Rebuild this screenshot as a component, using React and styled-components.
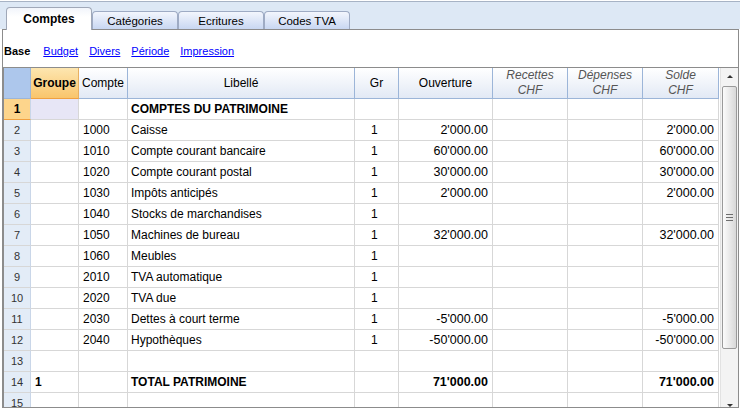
import React from 'react';
import styled, { createGlobalStyle, css } from 'styled-components';

const GlobalStyle = createGlobalStyle`
  html, body {
    margin: 0;
    padding: 0;
    background: #ffffff;
  }
  body {
    font-family: "Liberation Sans", Arial, sans-serif;
    color: #000;
  }
`;

const COLS = '27px 48px 49px 227px 44px 94px 75px 75px 76px';

const ROWS = [
  { n: 1, libelle: 'COMPTES DU PATRIMOINE', title: true },
  { n: 2, compte: '1000', libelle: 'Caisse', gr: '1', ouv: "2'000.00", solde: "2'000.00" },
  { n: 3, compte: '1010', libelle: 'Compte courant bancaire', gr: '1', ouv: "60'000.00", solde: "60'000.00" },
  { n: 4, compte: '1020', libelle: 'Compte courant postal', gr: '1', ouv: "30'000.00", solde: "30'000.00" },
  { n: 5, compte: '1030', libelle: 'Impôts anticipés', gr: '1', ouv: "2'000.00", solde: "2'000.00" },
  { n: 6, compte: '1040', libelle: 'Stocks de marchandises', gr: '1' },
  { n: 7, compte: '1050', libelle: 'Machines de bureau', gr: '1', ouv: "32'000.00", solde: "32'000.00" },
  { n: 8, compte: '1060', libelle: 'Meubles', gr: '1' },
  { n: 9, compte: '2010', libelle: 'TVA automatique', gr: '1' },
  { n: 10, compte: '2020', libelle: 'TVA due', gr: '1' },
  { n: 11, compte: '2030', libelle: 'Dettes à court terme', gr: '1', ouv: "-5'000.00", solde: "-5'000.00" },
  { n: 12, compte: '2040', libelle: 'Hypothèques', gr: '1', ouv: "-50'000.00", solde: "-50'000.00" },
  { n: 13 },
  { n: 14, groupe: '1', libelle: 'TOTAL PATRIMOINE', ouv: "71'000.00", solde: "71'000.00", total: true },
  { n: 15 },
];

const Window = styled.div`
  width: 740px;
  height: 410px;
  display: flex;
  flex-direction: column;
  overflow: hidden;
`;

const TabBar = styled.div`
  height: 27px;
  margin-top: 1px;
  border-top: 1px solid #a7b3c5;
  background: #dde8f5;
  display: flex;
  align-items: flex-end;
  padding-left: 6px;
  position: relative;
  z-index: 1;
`;

const Tab = styled.div`
  box-sizing: border-box;
  width: 86px;
  display: flex;
  align-items: center;
  justify-content: center;
  font-size: 11.5px;
  border: 1px solid #9eabc4;
  border-bottom: none;
  border-radius: 4px 4px 0 0;
  height: 18px;
  background: linear-gradient(#f3f6fd, #c8d7f2);
  color: #000;

  ${(p) =>
    p.$active &&
    css`
      height: 23px;
      margin-bottom: -1px;
      font-weight: bold;
      font-size: 12px;
      padding-bottom: 1px;
      border-color: #a0a8b8;
      background: linear-gradient(#f2f5fb, #ffffff 40%);
    `}
`;

const Panel = styled.div`
  flex: 1;
  margin: 0 1px 2px 2px;
  border: 1px solid #8c8c8c;
  background: #fff;
  display: flex;
  flex-direction: column;
  min-height: 0;
`;

const SubTabs = styled.div`
  box-sizing: border-box;
  height: 37px;
  padding: 4px 0 0 1px;
  display: flex;
  align-items: center;
  gap: 11px;
  font-size: 11px;
`;

const SubTab = styled.span`
  ${(p) =>
    p.$active
      ? css`
          font-weight: bold;
          margin-right: 2px;
        `
      : css`
          color: #0000ff;
          text-decoration: underline;
        `}
`;

const GridArea = styled.div`
  flex: 1;
  min-height: 0;
  display: flex;
  overflow: hidden;
  border-top: 1px solid #8c8c8c;
  border-left: 1px solid #8c8c8c;
`;

const Table = styled.div`
  display: flex;
  flex-direction: column;
`;

const HeaderRow = styled.div`
  display: grid;
  grid-template-columns: ${COLS};
  height: 31px;
`;

const HeadCell = styled.div`
  box-sizing: border-box;
  border-right: 1px solid #9cb5d8;
  border-bottom: 1px solid #9cb5d8;
  background: linear-gradient(#ffffff, #e2e9f5);
  display: flex;
  flex-direction: column;
  align-items: center;
  justify-content: center;
  font-size: 12px;
  line-height: 15px;
  color: #000;

  ${(p) =>
    p.$italic &&
    css`
      font-style: italic;
      color: #555;
    `}
  ${(p) =>
    p.$corner &&
    css`
      background: #adc7ec;
      border-color: #adc7ec #9cb5d8 #9cb5d8 #adc7ec;
    `}
  ${(p) =>
    p.$group &&
    css`
      background: linear-gradient(#fde6b0, #f9c56c);
      border-bottom: 1px solid #f0a040;
      border-right-color: #e8b060;
      font-weight: bold;
    `}
`;

const Row = styled.div`
  display: grid;
  grid-template-columns: ${COLS};
  height: 21px;
  flex-shrink: 0;
`;

const Cell = styled.div`
  box-sizing: border-box;
  border-right: 1px solid #d7d7d7;
  border-bottom: 1px solid #d7d7d7;
  display: flex;
  align-items: center;
  justify-content: ${(p) => (p.$right ? 'flex-end' : 'flex-start')};
  padding: ${(p) => (p.$right ? '0 4px 0 0' : `0 0 0 ${p.$pad || 3}px`)};
  font-size: 12px;
  font-weight: ${(p) => (p.$bold ? 'bold' : 'normal')};
  white-space: nowrap;
  background: ${(p) => p.$bg || '#fff'};

  ${(p) =>
    p.$right &&
    css`
      font-size: 12.5px;
    `}
`;

const NumCell = styled.div`
  box-sizing: border-box;
  border-right: 1px solid #c9d6e8;
  border-bottom: 1px solid #d7d7d7;
  display: flex;
  align-items: center;
  justify-content: center;
  font-size: 11px;
  color: #333;
  background: #e3ecf7;

  ${(p) =>
    p.$current &&
    css`
      background: #fdd58c;
      border-bottom: 1px solid #f0a040;
      font-weight: bold;
      color: #000;
      font-size: 12px;
    `}
`;

const ScrollBar = styled.div`
  width: 17px;
  height: 346px;
  flex-shrink: 0;
  margin-left: 1px;
  background: #f3f3f3;
  border-left: 1px solid #e2e2e2;
  display: flex;
  flex-direction: column;
`;

const ArrowButton = styled.div`
  height: 17px;
  flex-shrink: 0;
  display: flex;
  align-items: center;
  justify-content: center;

  &::before {
    content: '';
    border-left: 3px solid transparent;
    border-right: 3px solid transparent;
    ${(p) =>
      p.$down
        ? 'border-top: 3px solid #333;'
        : 'border-bottom: 3px solid #333;'}
  }
`;

const Track = styled.div`
  flex: 1;
  display: flex;
  flex-direction: column;
`;

const Thumb = styled.div`
  box-sizing: border-box;
  height: 263px;
  margin: 1px 1px 0 1px;
  border: 1px solid #9a9a9a;
  border-radius: 2px;
  background: linear-gradient(90deg, #fbfbfb, #e6e6e6 60%, #d8d8d8);
  display: flex;
  align-items: center;
  justify-content: center;
`;

const Grip = styled.div`
  width: 7px;
  height: 7px;
  background: repeating-linear-gradient(#6e6e6e 0 1px, transparent 1px 3px);
`;

function DataRow({ row }) {
  const bold = row.title || row.total;
  return (
    <Row>
      <NumCell $current={row.n === 1}>{row.n}</NumCell>
      <Cell $bold $bg={row.n === 1 ? '#e7e6f6' : undefined} $pad={4}>
        {row.groupe}
      </Cell>
      <Cell $pad={4}>{row.compte}</Cell>
      <Cell $bold={bold}>{row.libelle}</Cell>
      <Cell $pad={16}>{row.gr}</Cell>
      <Cell $right $bold={bold}>{row.ouv}</Cell>
      <Cell $right />
      <Cell $right />
      <Cell $right $bold={bold}>{row.solde}</Cell>
    </Row>
  );
}

export default function App() {
  return (
    <Window>
      <GlobalStyle />
      <TabBar>
        <Tab $active>Comptes</Tab>
        <Tab>Catégories</Tab>
        <Tab>Ecritures</Tab>
        <Tab>Codes TVA</Tab>
      </TabBar>
      <Panel>
        <SubTabs>
          <SubTab $active>Base</SubTab>
          <SubTab>Budget</SubTab>
          <SubTab>Divers</SubTab>
          <SubTab>Période</SubTab>
          <SubTab>Impression</SubTab>
        </SubTabs>
        <GridArea>
          <Table>
            <HeaderRow>
              <HeadCell $corner />
              <HeadCell $group>Groupe</HeadCell>
              <HeadCell>Compte</HeadCell>
              <HeadCell>Libellé</HeadCell>
              <HeadCell>Gr</HeadCell>
              <HeadCell>Ouverture</HeadCell>
              <HeadCell $italic>
                <span>Recettes</span>
                <span>CHF</span>
              </HeadCell>
              <HeadCell $italic>
                <span>Dépenses</span>
                <span>CHF</span>
              </HeadCell>
              <HeadCell $italic>
                <span>Solde</span>
                <span>CHF</span>
              </HeadCell>
            </HeaderRow>
            {ROWS.map((row) => (
              <DataRow key={row.n} row={row} />
            ))}
          </Table>
          <ScrollBar>
            <ArrowButton />
            <Track>
              <Thumb>
                <Grip />
              </Thumb>
            </Track>
            <ArrowButton $down />
          </ScrollBar>
        </GridArea>
      </Panel>
    </Window>
  );
}
